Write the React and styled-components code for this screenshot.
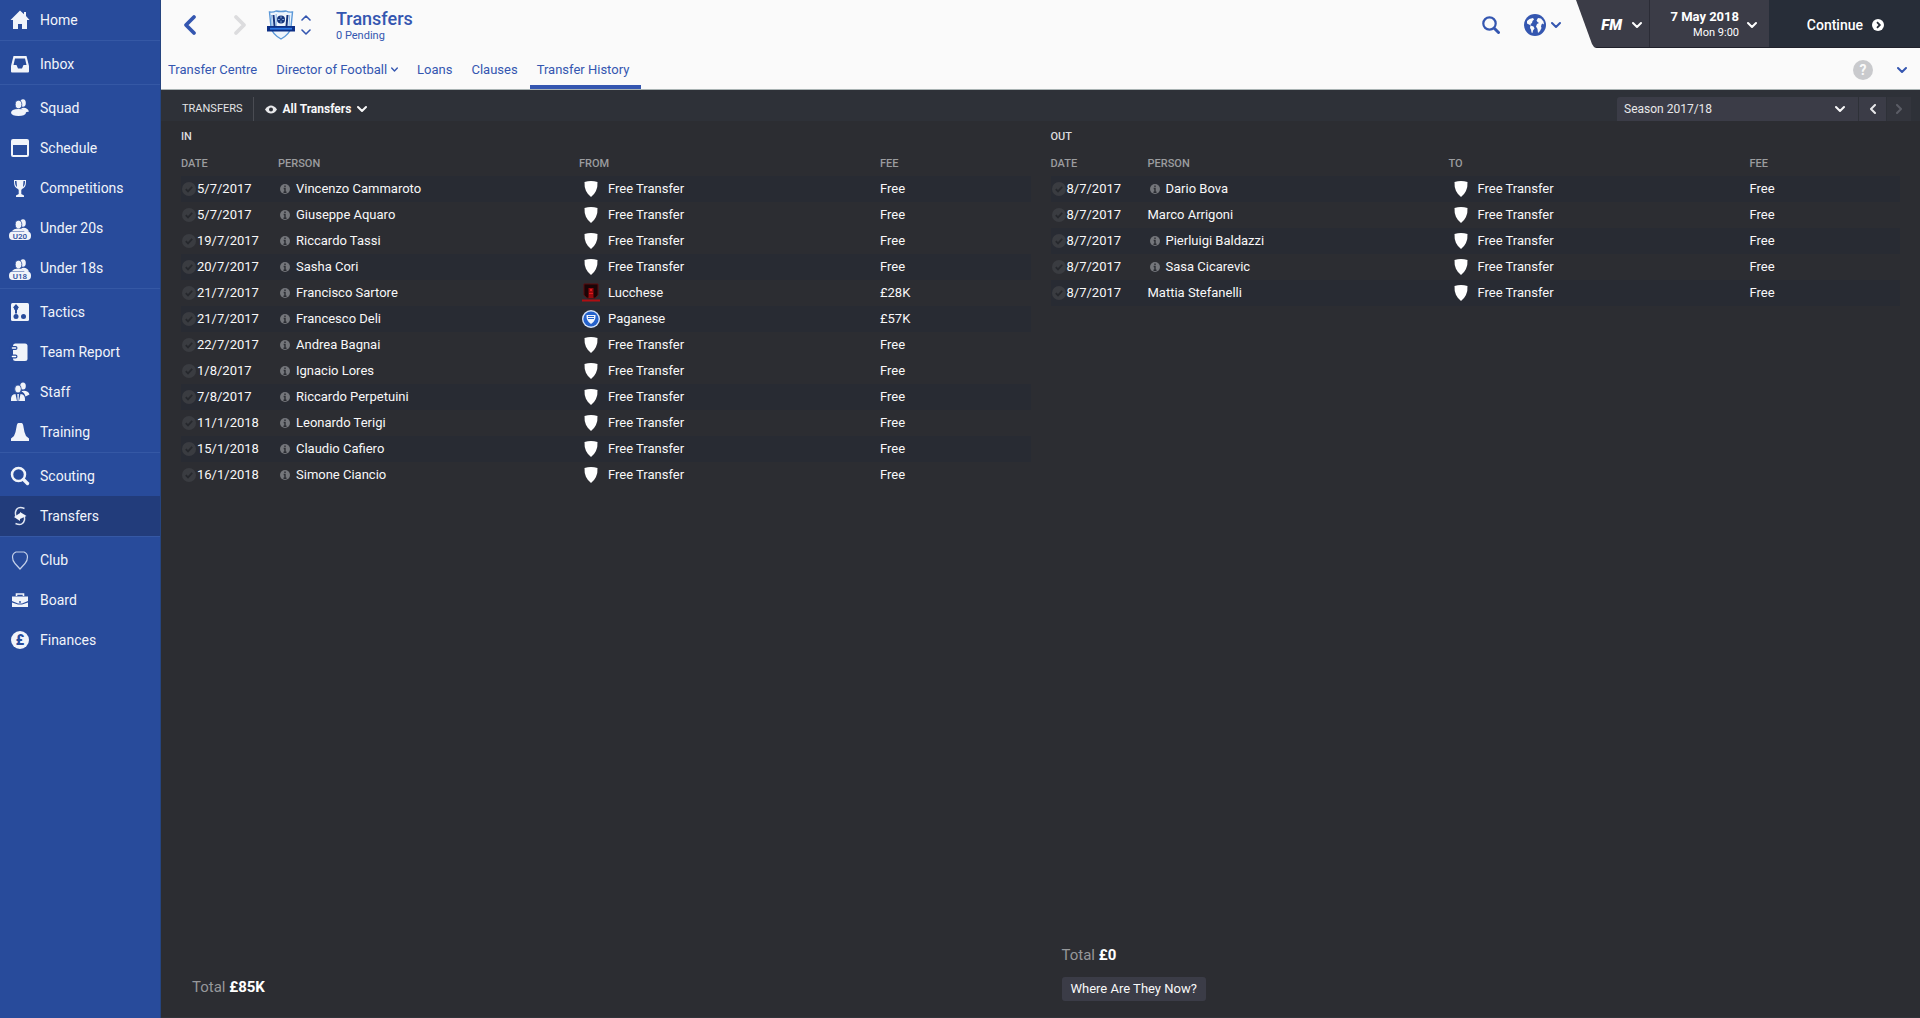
import React, { useState } from "react"
import styled, { createGlobalStyle } from "styled-components"

let GlobalStyle = createGlobalStyle`
  * {
    box-sizing: border-box;
  }

  body {
    margin: 0;
    background: #2c2d32;
    color: #f8f8f9;
    font: 400 13px/20px Roboto, "Liberation Sans", sans-serif;
  }

  button,
  select {
    font: inherit;
    color: inherit;
    background: none;
    border: 0;
    padding: 0;
    cursor: pointer;
  }

  a {
    color: inherit;
    text-decoration: none;
  }

  svg {
    display: block;
    flex: none;
  }
`

let Page = styled.div`
  display: flex;
  min-height: 100vh;
`

/* Sidebar */

let Sidebar = styled.nav`
  flex: none;
  width: 161px;
  background: #284b9b;
  border-right: 1px solid #25447f;
`

let NavGroup = styled.ul`
  list-style: none;
  margin: 0;
  padding: 0;

  & + & {
    padding-top: 3px;
    border-top: 1px solid #3558a5;
  }
`

let NavLink = styled.a`
  display: flex;
  align-items: center;
  gap: 8px;
  height: 40px;
  padding-left: 8px;
  font-size: 14px;
  color: #f1f4fa;
  background: ${p => (p.$active ? "#223c7b" : "none")};
`

/* Header */

let Main = styled.div`
  flex: 1;
  min-width: 0;
  display: flex;
  flex-direction: column;
`

let Header = styled.header`
  background: #fafafa;
  color: #3456b0;
  border-bottom: 1px solid #a9b3b3;
`

let TopRow = styled.div`
  display: flex;
  height: 48px;
`

let TitleArea = styled.div`
  flex: 1;
  display: flex;
  align-items: center;
  padding-top: 2px;
  padding-left: 19px;
`

let HistoryButton = styled.button`
  width: 20px;
  margin-right: 30px;
  color: ${p => (p.disabled ? "#dcdcde" : "#3456b0")};
`

let CrestButton = styled.button`
  display: flex;
  align-items: center;
  gap: 6px;
  margin-left: -13px;
  margin-right: 25px;
`

let SwitchArrows = styled.span`
  display: flex;
  flex-direction: column;
  gap: 4px;
`

let Title = styled.h1`
  margin: 0;
  padding-top: 1px;
  font-size: 18px;
  line-height: 20px;
  font-weight: 500;
`

let Subtitle = styled.p`
  margin: 0;
  font-size: 11px;
  line-height: 13px;
`

let Tools = styled.div`
  display: flex;
  align-items: center;
  gap: 24px;
  padding-top: 2px;
  padding-right: 15px;
`

let ToolButton = styled.button`
  display: flex;
  align-items: center;
  gap: 5px;
`

let GameBar = styled.div`
  display: flex;
  color: #fff;
  background: #3b3c47;
  border-bottom: 1px solid #20212b;
  clip-path: polygon(0 0, 100% 0, 100% 100%, 21px 100%, 18px 47px, 16px 44px);
`

let Logo = styled.span`
  font: italic 900 15px/20px Roboto, "Liberation Sans", sans-serif;
`

let LogoButton = styled.button`
  display: flex;
  align-items: center;
  justify-content: flex-end;
  gap: 10px;
  width: 73px;
  padding-right: 7px;
  padding-top: 2px;
`

let DateButton = styled.button`
  display: flex;
  align-items: center;
  justify-content: flex-end;
  gap: 8px;
  width: 120px;
  padding-top: 2px;
  padding-right: 12px;
  text-align: right;
  border-left: 1px solid #2b2c36;
`

let Day = styled.strong`
  display: block;
  font-size: 13px;
  line-height: 16px;
  font-weight: 700;
`

let Time = styled.span`
  display: block;
  font-size: 11px;
  line-height: 16px;
`

let Continue = styled.button`
  display: flex;
  align-items: center;
  justify-content: flex-end;
  gap: 9px;
  width: 151px;
  padding-right: 36px;
  padding-top: 2px;
  font-size: 14px;
  font-weight: 500;
  background: #272d38;
`

let TabRow = styled.div`
  display: flex;
  justify-content: space-between;
  height: 41px;
`

let Tabs = styled.nav`
  display: flex;
`

let Tab = styled.a`
  display: flex;
  align-items: center;
  gap: 4px;
  padding: 6px 12px 0 7px;
  border-bottom: 4px solid ${p => (p.$active ? "#3456b0" : "transparent")};
`

let TabTools = styled.div`
  display: flex;
  align-items: center;
  gap: 24px;
  padding-top: 2px;
  padding-right: 13px;
`

let Help = styled.button`
  width: 20px;
  height: 20px;
  border-radius: 50%;
  background: #c9cacd;
  color: #fafafa;
  font-size: 14px;
  font-weight: 700;
`

/* Filter bar */

let FilterBar = styled.div`
  display: flex;
  align-items: center;
  justify-content: space-between;
  height: 31px;
  padding: 7px 9px 0 21px;
  background: #2e3138;
`

let Filters = styled.div`
  display: flex;
  align-items: center;
  height: 24px;
`

let FilterLabel = styled.h2`
  margin: 0;
  padding-right: 10px;
  font-size: 11px;
  line-height: 24px;
  font-weight: 400;
  color: #e2e3e5;
  border-right: 1px solid #4a4c53;
`

let ViewButton = styled.button`
  display: flex;
  align-items: center;
  padding-left: 11px;
  gap: 6px;
  font-size: 12px;
  font-weight: 700;
`

let Season = styled.div`
  display: flex;
  gap: 1px;
  height: 24px;
`

let SeasonPicker = styled.div`
  display: grid;
  align-items: center;
  width: 241px;
  background: #3b3c47;
  border-radius: 3px 0 0 0;

  & > * {
    grid-area: 1 / 1;
  }

  svg {
    justify-self: end;
    margin-right: 13px;
    pointer-events: none;
  }
`

let SeasonSelect = styled.select`
  appearance: none;
  width: 100%;
  height: 24px;
  padding-left: 7px;
  font-size: 12px;
  color: #e8e8ea;
`

let SeasonStep = styled.button`
  display: flex;
  align-items: center;
  justify-content: center;
  width: ${p => (p.disabled ? 24 : 27)}px;
  background: ${p => (p.disabled ? "#33353d" : "#3b3c47")};
  color: ${p => (p.disabled ? "#5b5d66" : "#e8e8ea")};
`

/* Transfer lists */

let Lists = styled.main`
  flex: 1;
  display: grid;
  grid-template-columns: 1fr 1fr;
  gap: 20px;
  padding: 0 20px 16px 20px;
  border: solid #30333a;
  border-width: 0 0 1px;
`

let List = styled.section`
  display: flex;
  flex-direction: column;
`

let ListTitle = styled.h3`
  margin: 0;
  font-size: 11px;
  line-height: 31px;
  font-weight: 500;
  color: #dcdcde;
`

let Table = styled.table`
  display: block;

  thead,
  tbody {
    display: block;
  }

  th {
    padding: 0;
    font-size: 11px;
    line-height: 24px;
    font-weight: 500;
    text-align: left;
    color: #9b9c9f;
  }
`

let Row = styled.tr`
  display: grid;
  grid-template-columns: 97px 2fr 2fr 1fr;
  background: ${p => (p.$shaded ? "#282b33" : "none")};
`

let Cell = styled.td`
  display: flex;
  align-items: center;
  gap: ${p => p.$gap || 0}px;
  height: 26px;
  padding: 0;
`

let Footer = styled.footer`
  display: flex;
  flex-direction: column;
  align-items: flex-start;
  gap: 12px;
  margin-top: auto;
  padding-left: 11px;
`

let Total = styled.p`
  margin: 0;
  font-size: 15px;
  line-height: 20px;
  color: #96979a;
  padding-bottom: ${p => (p.$last ? 4 : 0)}px;

  strong {
    color: #fff;
    font-weight: 700;
  }
`

let NowButton = styled.button`
  height: 24px;
  padding: 0 9px;
  background: #3b3c47;
  border-radius: 3px;
`

/* Icons */

let Chevron = ({ size = 10, turn = 0, weight = 2 }) => (
  <svg width={size} height={size} viewBox="0 0 10 10" fill="none">
    <path
      d="M1 3l4 4 4-4"
      stroke="currentColor"
      strokeWidth={weight}
      strokeLinecap="round"
      strokeLinejoin="round"
      transform={`rotate(${turn} 5 5)`}
    />
  </svg>
)

let BigArrow = ({ flip }) => (
  <svg width="20" height="24" viewBox="0 0 20 24" fill="none">
    <path
      d={flip ? "M6 4l8 8-8 8" : "M14 4l-8 8 8 8"}
      stroke="currentColor"
      strokeWidth="3.800"
      strokeLinecap="round"
      strokeLinejoin="round"
    />
  </svg>
)

let SearchIcon = ({ size = 18 }) => (
  <svg width={size} height={size} viewBox="0 0 18 18" fill="none" stroke="currentColor">
    <circle cx="7.500" cy="7.500" r="6.200" strokeWidth="2.200" />
    <path d="M12.500 12.500l4 4" strokeWidth="3" strokeLinecap="round" />
  </svg>
)

let GlobeIcon = () => (
  <svg width="22" height="22" viewBox="0 0 22 22">
    <circle cx="11" cy="11" r="11" fill="#3456b0" />
    <path
      fill="#fafafa"
      d="M3 7l2.500-2 3.500-1 1 1.500L8.500 7 8 9 6.500 10l.5 1.500-2-1L3 9.500zM6.500 11.500l3 1 1 2-1.500 2-.5 2.500-1-.5-.5-3-1-1.500zM12.500 6.500L14 4l3 .5 2.500 3 .5 3-1.500-1-1 1-.5 2 .5 1.500-1.500 3L14 19l-.5-4-1.500-2.500 1-2.500 2-1-1.500-1z"
    />
  </svg>
)

let ClubCrest = () => (
  <svg width="28" height="30" viewBox="0 0 28 30">
    <path
      d="M2.500 2q4 .5 6.500-1 5 1 10 0 2.500 1.500 6.500 1l-1.500 15q-1 7-10 12-9-5-10-12z"
      fill="#eef5fd"
      stroke="#5b98d8"
      strokeWidth="1.400"
    />
    <path d="M6.500 5l1 11M20.500 5l-1 11" stroke="#16357d" strokeWidth="2" />
    <path d="M9.200 4v12M22.700 5l-.7 11M4.500 5l.7 11" stroke="#6fa5df" strokeWidth="0.800" />
    <circle cx="14" cy="9.500" r="4" fill="#16357d" />
    <path d="M14 6.300v6.400M10.800 9.500h6.400" stroke="#a9cdf3" strokeWidth="0.800" />
    <circle cx="14" cy="9.500" r="1.200" fill="#16357d" />
    <path d="M0 16h28v5.500H0z" fill="#0c2f86" />
    <path d="M3 18.700h22" stroke="#2f7be6" strokeWidth="1.800" />
  </svg>
)

let EyeIcon = () => (
  <svg width="12" height="9" viewBox="0 0 12 9">
    <path
      fillRule="evenodd"
      fill="#e8e8ea"
      d="M0 4.500C2 1.500 4 .5 6 .5s4 1 6 4c-2 3-4 4-6 4s-4-1-6-4zM6 2.500a2 2 0 1 0 0 4 2 2 0 0 0 0-4z"
    />
  </svg>
)

let ContinueIcon = () => (
  <svg width="12" height="12" viewBox="0 0 12 12">
    <circle cx="6" cy="6" r="6" fill="#fff" />
    <path d="M5 3.200L7.800 6 5 8.800" fill="none" stroke="#272d38" strokeWidth="1.800" />
  </svg>
)

let CheckIcon = () => (
  <svg width="16" height="14" viewBox="0 0 16 14">
    <circle cx="8" cy="7" r="7" fill="#3a3c41" />
    <path d="M4.800 7.200l2.200 2.200 4.200-4.500" fill="none" stroke="#26282d" strokeWidth="1.800" />
  </svg>
)

let InfoIcon = () => (
  <svg width="14" height="10" viewBox="0 0 14 10">
    <circle cx="7" cy="5" r="5" fill="#74767b" />
    <path d="M7 1.500v1.600M5.700 4.500H7v4M5.500 8.300h3" stroke="#2b2d33" strokeWidth="1.400" fill="none" />
  </svg>
)

let Badge = ({ club }) => {
  if (club === "Lucchese") {
    return (
      <svg width="24" height="20" viewBox="0 0 24 20">
        <path d="M5 1h14v11l-3 3H8l-3-3z" fill="#1b0507" stroke="#5a0a0d" />
        <path d="M9.500 5h5v10h-5z" fill="#98090d" />
        <path d="M11 6h2v2h-2zM10 10h4v1h-4z" fill="#e0191c" />
        <path d="M3 16.500h18v2H3z" fill="#b00e12" />
      </svg>
    )
  }
  if (club === "Paganese") {
    return (
      <svg width="24" height="20" viewBox="0 0 24 20">
        <circle cx="12" cy="10" r="9" fill="#d5e3f8" />
        <circle cx="12" cy="10" r="7.600" fill="#2461cb" />
        <path d="M7.500 6h9q.5 6-4.500 9-5-3-4.500-9z" fill="#eef4fd" />
        <path d="M9 7.500h6M9 9.500h6" stroke="#2461cb" />
      </svg>
    )
  }
  return (
    <svg width="24" height="20" viewBox="0 0 24 20">
      <path d="M5.500 3q6.500-2 13 0 .5 9.500-6.500 15Q5 12.500 5.500 3z" fill="#fff" />
    </svg>
  )
}

let People = ({ label }) => (
  <>
    <ellipse cx="15" cy="7" rx="2.800" ry="3.800" />
    <path d="M14 12q5-1 7 3.500l-4 1q-1-3-4-3.500z" />
    <ellipse cx="10.500" cy="8.500" rx="3.300" ry="4.200" stroke="#284b9b" strokeWidth="0.800" />
    {label ? (
      <>
        <path d="M4 15q2-3 7-2.500 4 0 6 2.500z" />
        <rect x="1" y="15.500" width="22" height="8.500" rx="4" />
        <text
          x="12"
          y="22.500"
          textAnchor="middle"
          fontSize="8"
          fontWeight="500"
          fill="#284b9b"
        >
          {label}
        </text>
      </>
    ) : (
      <path d="M3 17q0-4 7.500-4T18 17q-1 3-7.500 3T3 17z" />
    )}
  </>
)

let navIcons = {
  Home: <path d="M12 2.500L2.500 12H5v9h5v-5h4v5h5v-9h2.500L18 8V4h-2v2.300z" />,
  Inbox: (
    <path
      fillRule="evenodd"
      d="M5.500 4h13L21 14v5.500q0 1-1 1H4q-1 0-1-1V14zM7 6.500L5.500 13h3l1.500 3.500h4l1.500-3.500h3L17 6.500z"
    />
  ),
  Squad: <People />,
  Schedule: (
    <path
      fillRule="evenodd"
      d="M5 3h14q2 0 2 2v14q0 2-2 2H5q-2 0-2-2V5q0-2 2-2zM5 9v10h14V9z"
    />
  ),
  Competitions: (
    <path
      fillRule="evenodd"
      d="M6 4h12v2c0 4-1.500 6-4 7l-.7 1v4l2.700 1.500V21H8v-1.500l2.700-1.500v-4L10 13c-2.500-1-4-3-4-7zM7 5c0 3 .5 5 2 6L8.500 5zM17 5h-1.500L15 11c1.500-1 2-3 2-6z"
    />
  ),
  "Under 20s": <People label="U20" />,
  "Under 18s": <People label="U18" />,
  Tactics: (
    <>
      <rect x="3" y="3" width="18" height="18" rx="1.500" />
      <g fill="#284b9b">
        <path d="M8 4l3 3.500-2 1v5H7v-5l-2-1z" />
        <circle cx="8" cy="16.500" r="2.500" />
        <circle cx="15.500" cy="16.500" r="2.500" />
        <circle cx="8" cy="8" r="2.200" />
      </g>
    </>
  ),
  "Team Report": (
    <>
      <rect x="5" y="3.500" width="14.500" height="17.500" rx="2.500" />
      <path d="M3 8h4.500M3 16.500h4.500" stroke="#284b9b" strokeWidth="4" strokeLinecap="round" />
      <path d="M4.500 8h3M4.500 16.500h3" stroke="#fff" strokeWidth="1.600" strokeLinecap="round" />
    </>
  ),
  Staff: (
    <>
      <ellipse cx="15" cy="6" rx="2.800" ry="3.600" />
      <path d="M14 11q6-1 7.500 3.500l-4 2q-1-4-4-5z" />
      <ellipse cx="10" cy="9" rx="3.300" ry="4" stroke="#284b9b" strokeWidth="0.800" />
      <path d="M3 21q-.5-7 4.500-7L9 21zM17 21q.5-7-4.500-7L11 21z" />
      <path d="M9.300 14h1.600l-.3 7h-1z" />
    </>
  ),
  Training: <path d="M10.500 3h3q1.500 0 2 4 .8 6 2.500 9l3 2.500V21H3v-2.500L6 16q1.700-3 2.500-9 .5-4 2-4z" />,
  Scouting: (
    <g fill="none" stroke="currentColor">
      <circle cx="10.500" cy="10.500" r="6.500" strokeWidth="2.500" />
      <path d="M15.500 15.500l4 4" strokeWidth="3.400" strokeLinecap="round" />
    </g>
  ),
  Transfers: (
    <>
      <path
        d="M16.500 4.500Q9 1.500 7.500 8q-.3 3 .7 5M7.500 19.500q7.500 3 9-3.500.3-3-.7-5"
        fill="none"
        stroke="#dfe5f2"
        strokeWidth="1.500"
      />
      <path d="M6 13l6-4v8zM18.500 12l-6.500-4v7z" />
    </>
  ),
  Club: (
    <path
      d="M8 4h8q3.500 1.500 3.500 5 0 4-2.500 6.500l-5 5.500-5-5.500Q4.500 13 4.500 9 4.500 5.500 8 4z"
      fill="none"
      stroke="#c5d1ea"
      strokeWidth="1.200"
    />
  ),
  Board: (
    <>
      <path d="M8.500 8V6h7v2" fill="none" stroke="currentColor" strokeWidth="1.600" />
      <path d="M4 8.500h16V13l-6 2.500h-4L4 13z" />
      <path d="M4 14.500l6 2h4l6-2V19H4z" />
      <circle cx="12" cy="14" r="0.900" fill="#284b9b" />
    </>
  ),
  Finances: (
    <>
      <circle cx="12" cy="12" r="9" />
      <text x="12" y="17" textAnchor="middle" fontSize="14" fontWeight="900" fill="#284b9b">
        £
      </text>
    </>
  )
}

let navGroups = [
  ["Home"],
  ["Inbox"],
  ["Squad", "Schedule", "Competitions", "Under 20s", "Under 18s"],
  ["Tactics", "Team Report", "Staff", "Training"],
  ["Scouting", "Transfers"],
  ["Club", "Board", "Finances"]
]

let tabs = ["Transfer Centre", "Director of Football", "Loans", "Clauses", "Transfer History"]

let free = "Free Transfer"

let transfersIn = [
  { date: "5/7/2017", person: "Vincenzo Cammaroto", club: free, fee: "Free", info: true, shaded: true },
  { date: "5/7/2017", person: "Giuseppe Aquaro", club: free, fee: "Free", info: true },
  { date: "19/7/2017", person: "Riccardo Tassi", club: free, fee: "Free", info: true },
  { date: "20/7/2017", person: "Sasha Cori", club: free, fee: "Free", info: true, shaded: true },
  { date: "21/7/2017", person: "Francisco Sartore", club: "Lucchese", fee: "£28K", info: true },
  { date: "21/7/2017", person: "Francesco Deli", club: "Paganese", fee: "£57K", info: true, shaded: true },
  { date: "22/7/2017", person: "Andrea Bagnai", club: free, fee: "Free", info: true },
  { date: "1/8/2017", person: "Ignacio Lores", club: free, fee: "Free", info: true },
  { date: "7/8/2017", person: "Riccardo Perpetuini", club: free, fee: "Free", info: true, shaded: true },
  { date: "11/1/2018", person: "Leonardo Terigi", club: free, fee: "Free", info: true },
  { date: "15/1/2018", person: "Claudio Cafiero", club: free, fee: "Free", info: true, shaded: true },
  { date: "16/1/2018", person: "Simone Ciancio", club: free, fee: "Free", info: true }
]

let transfersOut = [
  { date: "8/7/2017", person: "Dario Bova", club: free, fee: "Free", info: true, shaded: true },
  { date: "8/7/2017", person: "Marco Arrigoni", club: free, fee: "Free" },
  { date: "8/7/2017", person: "Pierluigi Baldazzi", club: free, fee: "Free", info: true, shaded: true },
  { date: "8/7/2017", person: "Sasa Cicarevic", club: free, fee: "Free", info: true },
  { date: "8/7/2017", person: "Mattia Stefanelli", club: free, fee: "Free", shaded: true }
]

let TransferTable = ({ clubHeading, rows }) => (
  <Table>
    <thead>
      <Row>
        <th>DATE</th>
        <th>PERSON</th>
        <th>{clubHeading}</th>
        <th>FEE</th>
      </Row>
    </thead>
    <tbody>
      {rows.map(row => (
        <Row key={row.person} $shaded={row.shaded}>
          <Cell>
            <CheckIcon />
            {row.date}
          </Cell>
          <Cell $gap={4}>
            {row.info && <InfoIcon />}
            {row.person}
          </Cell>
          <Cell $gap={5}>
            <Badge club={row.club} />
            {row.club}
          </Cell>
          <Cell>{row.fee}</Cell>
        </Row>
      ))}
    </tbody>
  </Table>
)

let App = () => {
  let [season, setSeason] = useState("Season 2017/18")

  return (
    <Page>
      <GlobalStyle />
      <Sidebar>
        {navGroups.map(group => (
          <NavGroup key={group[0]}>
            {group.map(name => (
              <li key={name}>
                <NavLink href="#" $active={name === "Transfers"}>
                  <svg width="24" height="24" viewBox="0 0 24 24" fill="currentColor">
                    {navIcons[name]}
                  </svg>
                  {name}
                </NavLink>
              </li>
            ))}
          </NavGroup>
        ))}
      </Sidebar>
      <Main>
        <Header>
          <TopRow>
            <TitleArea>
              <HistoryButton aria-label="Back">
                <BigArrow />
              </HistoryButton>
              <HistoryButton aria-label="Forward" disabled>
                <BigArrow flip />
              </HistoryButton>
              <CrestButton aria-label="Switch club">
                <ClubCrest />
                <SwitchArrows>
                  <Chevron turn={180} weight={1.6} />
                  <Chevron weight={1.6} />
                </SwitchArrows>
              </CrestButton>
              <div>
                <Title>Transfers</Title>
                <Subtitle>0 Pending</Subtitle>
              </div>
            </TitleArea>
            <Tools>
              <ToolButton aria-label="Search">
                <SearchIcon />
              </ToolButton>
              <ToolButton aria-label="World">
                <GlobeIcon />
                <Chevron />
              </ToolButton>
            </Tools>
            <GameBar>
              <LogoButton>
                <Logo>FM</Logo>
                <Chevron />
              </LogoButton>
              <DateButton>
                <span>
                  <Day>7 May 2018</Day>
                  <Time>Mon 9:00</Time>
                </span>
                <Chevron />
              </DateButton>
              <Continue>
                Continue
                <ContinueIcon />
              </Continue>
            </GameBar>
          </TopRow>
          <TabRow>
            <Tabs>
              {tabs.map(tab => (
                <Tab key={tab} href="#" $active={tab === "Transfer History"}>
                  {tab}
                  {tab === "Director of Football" && <Chevron size={7} />}
                </Tab>
              ))}
            </Tabs>
            <TabTools>
              <Help>?</Help>
              <ToolButton aria-label="More">
                <Chevron />
              </ToolButton>
            </TabTools>
          </TabRow>
        </Header>
        <FilterBar>
          <Filters>
            <FilterLabel>TRANSFERS</FilterLabel>
            <ViewButton>
              <EyeIcon />
              All Transfers
              <Chevron />
            </ViewButton>
          </Filters>
          <Season>
            <SeasonPicker>
              <SeasonSelect
                aria-label="Season"
                value={season}
                onChange={e => setSeason(e.target.value)}
              >
                <option>Season 2017/18</option>
              </SeasonSelect>
              <Chevron />
            </SeasonPicker>
            <SeasonStep aria-label="Previous season">
              <Chevron turn={90} />
            </SeasonStep>
            <SeasonStep aria-label="Next season" disabled>
              <Chevron turn={-90} />
            </SeasonStep>
          </Season>
        </FilterBar>
        <Lists>
          <List>
            <ListTitle>IN</ListTitle>
            <TransferTable clubHeading="FROM" rows={transfersIn} />
            <Footer>
              <Total $last>
                Total <strong>£85K</strong>
              </Total>
            </Footer>
          </List>
          <List>
            <ListTitle>OUT</ListTitle>
            <TransferTable clubHeading="TO" rows={transfersOut} />
            <Footer>
              <Total>
                Total <strong>£0</strong>
              </Total>
              <NowButton>Where Are They Now?</NowButton>
            </Footer>
          </List>
        </Lists>
      </Main>
    </Page>
  )
}

export default App
